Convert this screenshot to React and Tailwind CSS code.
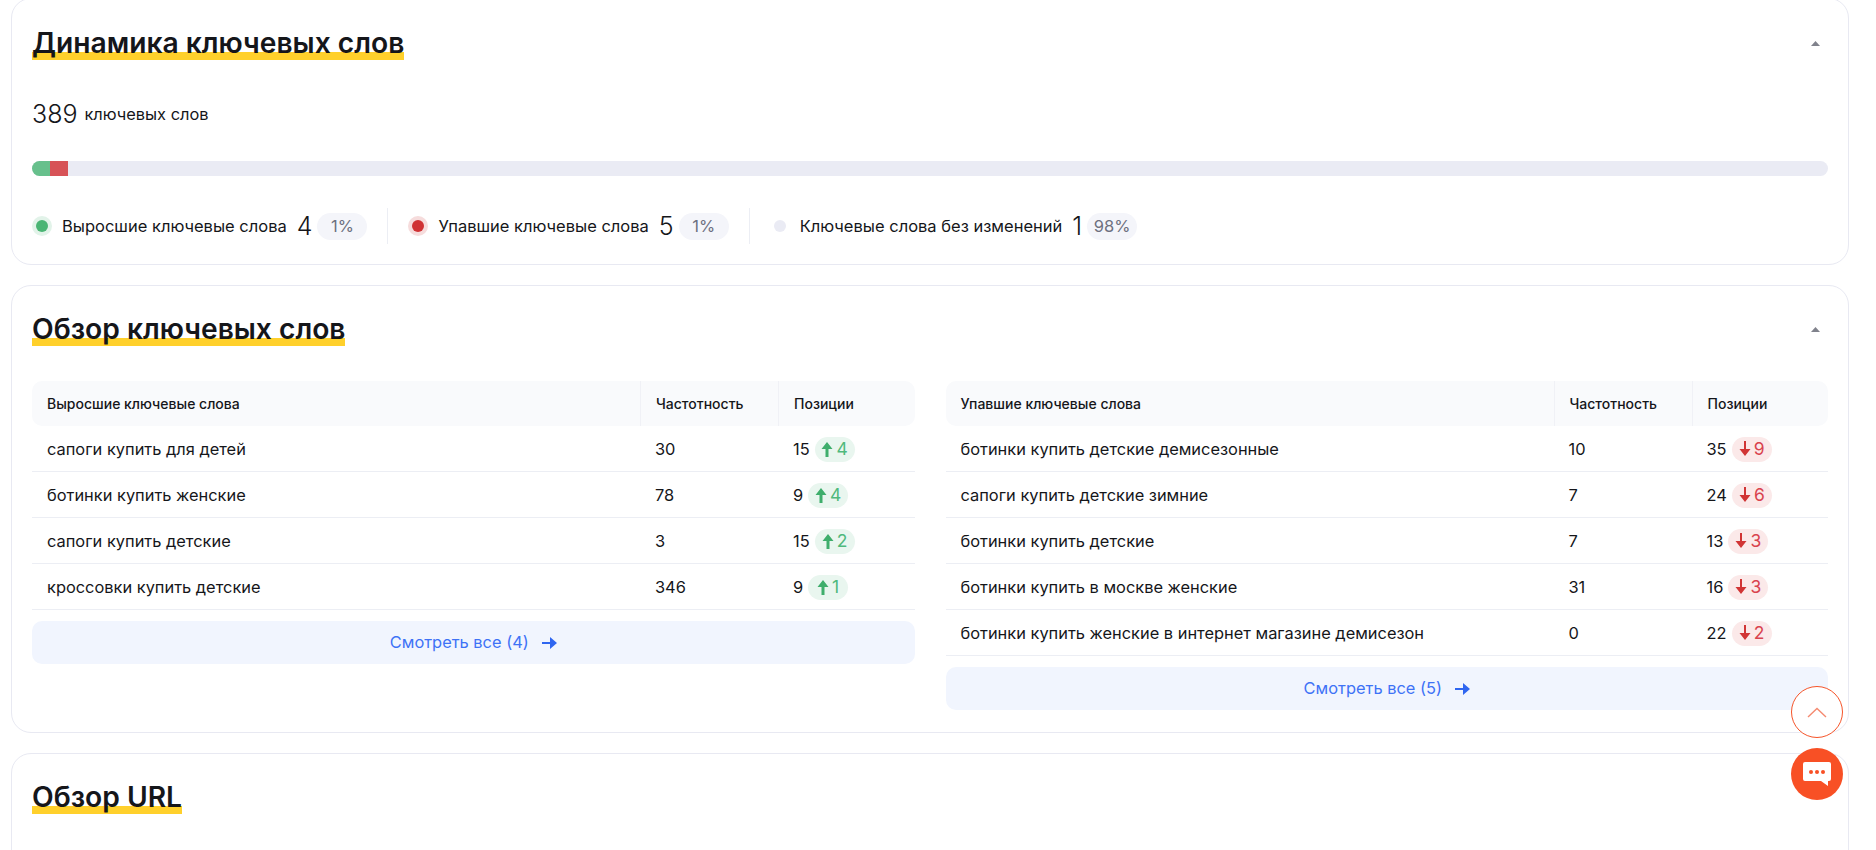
import React from "react";

const grew = [
  ["сапоги купить для детей", "30", "15", "4"],
  ["ботинки купить женские", "78", "9", "4"],
  ["сапоги купить детские", "3", "15", "2"],
  ["кроссовки купить детские", "346", "9", "1"],
];

const fell = [
  ["ботинки купить детские демисезонные", "10", "35", "9"],
  ["сапоги купить детские зимние", "7", "24", "6"],
  ["ботинки купить детские", "7", "13", "3"],
  ["ботинки купить в москве женские", "31", "16", "3"],
  ["ботинки купить женские в интернет магазине демисезон", "0", "22", "2"],
];

function Caret() {
  return (
    <svg width="9" height="5" viewBox="0 0 9 5" className="mr-[8px]">
      <path d="M4.5 0 L9 5 L0 5 Z" fill="#80828c" />
    </svg>
  );
}

function Heading({ children }) {
  return (
    <h2 className="text-[28.2px] leading-[34px] font-semibold text-[#15161a] bg-[linear-gradient(#ffd02b,#ffd02b)] bg-no-repeat bg-bottom bg-[length:100%_8px]">
      {children}
    </h2>
  );
}

function Legend({ dot, ring, label, value, pct }) {
  return (
    <div className="flex items-center">
      <span className={`flex items-center justify-center w-5 h-5 rounded-full ${ring}`}>
        <span className={`rounded-full w-3 h-3 ${dot}`} />
      </span>
      <span className="ml-[10px] text-[16.5px] text-[#15161a]">{label}</span>
      <span className="ml-[10px] text-[25px] leading-none font-light text-[#15161a]">{value}</span>
      <span className="ml-[5px] flex items-center justify-center w-[50px] h-[27px] rounded-full bg-[#f4f5fa] text-[16.5px] text-[#6d7080]">
        {pct}
      </span>
    </div>
  );
}

function Arrow({ up }) {
  return (
    <svg width="12" height="16" viewBox="0 0 12 16">
      {up ? (
        <path d="M6 1 L11.5 8 H7.5 V16 H4.5 V8 H0.5 Z" fill="#3fae6c" />
      ) : (
        <path d="M5 0 H7 V8 H11.5 L6 15 L0.5 8 H5 Z" fill="#d13535" />
      )}
    </svg>
  );
}

function KeywordTable({ title, rows, up, more }) {
  return (
    <div>
      <div className="grid grid-cols-[608px_138px_1fr] h-[45px] items-stretch rounded-[10px] bg-[#f9fafc] text-[14px] font-medium text-[#15161a]">
        <div className="flex items-center px-[15px]">{title}</div>
        <div className="flex items-center px-[15px] border-l border-[#f0f1f6]">Частотность</div>
        <div className="flex items-center px-[15px] border-l border-[#f0f1f6]">Позиции</div>
      </div>
      {rows.map((row) => (
        <div key={row[0]} className="grid grid-cols-[608px_138px_1fr] h-[46px] pt-[1px] items-center border-b border-[#eceef4] text-[16.4px] text-[#15161a]">
          <div className="px-[15px]">{row[0]}</div>
          <div className="px-[15px]">{row[1]}</div>
          <div className="px-[15px] flex items-center">
            <span>{row[2]}</span>
            <span className={`ml-[5px] flex items-center justify-center gap-[3px] w-[40px] h-[25px] rounded-full text-[17.5px] ${up ? "bg-[#e9f6ef] text-[#4fb97c]" : "bg-[#fbe9e9] text-[#d9434e]"}`}>
              <Arrow up={up} />
              {row[3]}
            </span>
          </div>
        </div>
      ))}
      <button className="mt-[11px] w-full h-[43px] flex items-center justify-center rounded-[10px] bg-[#f1f5fe] text-[16.4px] text-[#3e72f6]">
        {more}
        <svg width="15" height="12" viewBox="0 0 15 12" className="ml-[13px]">
          <path d="M0 5 H8 V0 L15 6 L8 12 V7 H0 Z" fill="#2f66f0" />
        </svg>
      </button>
    </div>
  );
}

export default function App() {
  return (
    <div className="relative h-[850px] overflow-hidden bg-white font-['Inter',sans-serif]">
      <div className="pl-[11px] pr-[27px] -mt-[2px] flex flex-col gap-[20px]">
        <section className="h-[267px] rounded-[20px] border border-[#e8e9f2] px-5">
          <div className="flex items-center justify-between pt-[27px]">
            <Heading>Динамика ключевых слов</Heading>
            <Caret />
          </div>
          <div className="flex items-center mt-[37px] text-[#15161a]">
            <span className="text-[25px] leading-[34px] font-light">389</span>
            <span className="ml-[7px] text-[16.4px]">ключевых слов</span>
          </div>
          <div className="flex h-[15px] mt-[30px] rounded-full overflow-hidden bg-[#eaebf4]">
            <div className="w-[18px] bg-[#67c08c]" />
            <div className="w-[18px] bg-[#d75357]" />
          </div>
          <div className="flex items-center mt-[32px]">
            <Legend ring="bg-[#e2f3e9]" dot="bg-[#4ab574]" label="Выросшие ключевые слова" value="4" pct="1%" />
            <div className="w-px h-[36px] bg-[#eceef4] mx-[20px]" />
            <Legend ring="bg-[#f6dcdc]" dot="bg-[#d03234]" label="Упавшие ключевые слова" value="5" pct="1%" />
            <div className="w-px h-[36px] bg-[#eceef4] mx-[20px]" />
            <Legend ring="bg-transparent" dot="bg-[#eaebf4]" label="Ключевые слова без изменений" value="1" pct="98%" />
          </div>
        </section>

        <section className="h-[448px] rounded-[20px] border border-[#e8e9f2] px-5">
          <div className="flex items-center justify-between pt-[26px]">
            <Heading>Обзор ключевых слов</Heading>
            <Caret />
          </div>
          <div className="grid grid-cols-2 gap-[31px] mt-[35px]">
            <KeywordTable title="Выросшие ключевые слова" rows={grew} up more="Смотреть все (4)" />
            <KeywordTable title="Упавшие ключевые слова" rows={fell} more="Смотреть все (5)" />
          </div>
        </section>

        <section className="h-[200px] rounded-[20px] border border-[#e8e9f2] px-5">
          <div className="flex pt-[26px]">
            <Heading>Обзор URL</Heading>
          </div>
        </section>
      </div>

      <button className="absolute left-[1791px] top-[686px] w-[52px] h-[52px] flex items-center justify-center rounded-full border border-[#f6552a] bg-white">
        <svg width="20" height="11" viewBox="0 0 20 11">
          <path d="M1 10 L10 1.5 L19 10" fill="none" stroke="#f58a70" strokeWidth="1.4" />
        </svg>
      </button>
      <button className="absolute left-[1791px] top-[748px] w-[52px] h-[52px] flex items-center justify-center rounded-full bg-[#f85025]">
        <svg width="28" height="25" viewBox="0 0 28 25">
          <path d="M2 0 H26 A2 2 0 0 1 28 2 V17 A2 2 0 0 1 26 19 H25 V24 L18 19 H2 A2 2 0 0 1 0 17 V2 A2 2 0 0 1 2 0 Z" fill="#fff" />
          <circle cx="8" cy="10" r="2" fill="#f85025" />
          <circle cx="14" cy="10" r="2" fill="#f85025" />
          <circle cx="20" cy="10" r="2" fill="#f85025" />
        </svg>
      </button>
    </div>
  );
}
